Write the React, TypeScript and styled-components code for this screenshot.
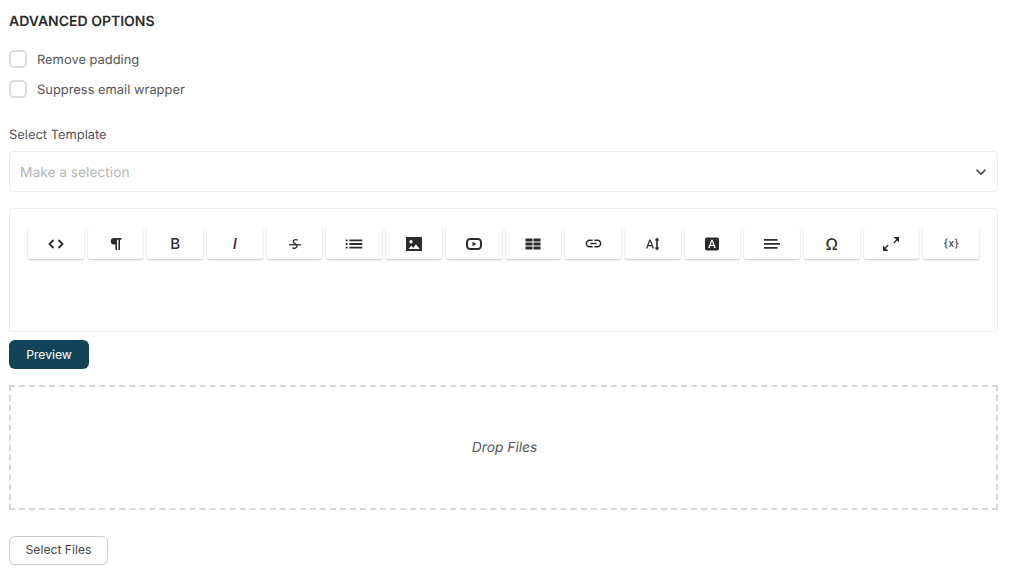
import React from "react";
import styled, { createGlobalStyle } from "styled-components";
import { MdLink, MdList, MdKeyboardArrowDown } from "react-icons/md";

const GlobalStyle = createGlobalStyle`
  html, body {
    margin: 0;
    padding: 0;
    background: #fff;
    overflow: hidden;
  }
  body {
    font-family: Inter, "Liberation Sans", sans-serif;
    text-rendering: geometricPrecision;
  }
`;

const Page = styled.div`
  width: 989px;
  height: 574px;
  padding: 14px 16px 0 9px;
  display: flex;
  flex-direction: column;
`;

const Heading = styled.h3`
  margin: 0 0 20px;
  font-size: 14px;
  line-height: 16px;
  font-weight: 600;
  color: #2b2b2b;
`;

const CheckRow = styled.label`
  display: flex;
  align-items: center;
  gap: 10px;
  height: 18px;
  margin-bottom: 12px;
  font-size: 12.9px;
  color: #555;
`;

const CheckText = styled.span`
  padding-top: 2px;
`;

const Box = styled.span`
  width: 18px;
  height: 18px;
  box-sizing: border-box;
  border: 2px solid #dcdcdc;
  border-radius: 5px;
  background: #fff;
`;

const FieldLabel = styled.div`
  margin-top: 18px;
  font-size: 12.9px;
  line-height: 16px;
  color: #555;
`;

const Select = styled.div`
  margin-top: 7px;
  height: 41px;
  box-sizing: border-box;
  border: 1px solid #ececec;
  border-radius: 4px;
  padding: 0 6px 0 10px;
  display: flex;
  align-items: center;
  justify-content: space-between;
  font-size: 13.75px;
  color: #b5b5b5;

  svg {
    color: #444;
  }
`;

const Placeholder = styled.span`
  padding-top: 2px;
`;

const Editor = styled.div`
  margin-top: 16px;
  height: 124px;
  box-sizing: border-box;
  border: 1px solid #ececec;
  border-radius: 4px;
  padding: 18px 18px 0;
`;

const Toolbar = styled.div`
  display: flex;
  gap: 4px;
`;

const ToolButton = styled.div`
  flex: 1;
  height: 32px;
  box-sizing: border-box;
  padding-top: 1px;
  border-radius: 2px;
  background: #fff;
  box-shadow: 0 1px 2px rgba(0, 0, 0, 0.24);
  display: flex;
  align-items: center;
  justify-content: center;
  color: #2b2b2b;
`;

const Glyph = styled.span<{ $size?: number; $italic?: boolean; $weight?: number }>`
  font-size: ${({ $size }) => $size ?? 14}px;
  font-style: ${({ $italic }) => ($italic ? "italic" : "normal")};
  font-weight: ${({ $weight }) => $weight ?? 600};
  line-height: 1;
`;

const Primary = styled.button`
  margin-top: 8px;
  align-self: flex-start;
  width: 80px;
  height: 29px;
  border: 0;
  border-radius: 6px;
  background: #134357;
  color: #fff;
  font-family: inherit;
  font-size: 12.2px;
  font-weight: 400;
`;

const Dropzone = styled.div`
  margin-top: 16px;
  height: 125px;
  box-sizing: border-box;
  border: 2px dashed #d6d6d6;
  padding-left: 2px;
  display: flex;
  align-items: center;
  justify-content: center;
  font-size: 13.8px;
  font-style: italic;
  color: #555;
`;

const Secondary = styled.button`
  margin-top: 26px;
  align-self: flex-start;
  width: 99px;
  height: 29px;
  box-sizing: border-box;
  padding-bottom: 3px;
  border: 1px solid #cfcfcf;
  border-radius: 6px;
  background: #fff;
  box-shadow: 0 1px 1px rgba(0, 0, 0, 0.06);
  color: #444;
  font-family: inherit;
  font-size: 12.2px;
  font-weight: 400;
`;

const icon = { width: 18, height: 18, viewBox: "0 0 18 18" };

const tools: React.ReactNode[] = [
  <svg {...icon} fill="none" stroke="currentColor" strokeWidth="1.8">
    <path d="M6.5 5 2.500 9l4 4M11.500 5l4 4-4 4" />
  </svg>,
  <svg {...icon} fill="currentColor">
    <path d="M7 3h7.500v1.700h-1.500V15h-1.600V4.700H10V15H8.400V9.500H7a3.250 3.250 0 0 1 0-6.500z" />
  </svg>,
  <Glyph $size={15} $weight={500}>B</Glyph>,
  <Glyph $size={15} $italic $weight={500}>I</Glyph>,
  <svg {...icon} fill="none" stroke="currentColor" strokeWidth="1.300">
    <path d="M11.800 5.200C9.800 4.200 7.200 4.600 7.200 6.500c0 2 3.800 2.300 3.800 4.500 0 2-2.500 2.800-4.500 1.800" />
    <path d="M3 9.800h12" />
  </svg>,
  <MdList size={22} />,
  <svg {...icon}>
    <rect x="1" y="2" width="16" height="14" fill="currentColor" />
    <circle cx="6" cy="6.800" r="1.700" fill="#fff" />
    <path d="M3.500 14 6.300 10.500 8.200 13 10.900 9.200 14.800 14z" fill="#fff" />
  </svg>,
  <svg {...icon}>
    <rect x="2" y="4" width="14" height="10" rx="3.200" fill="none" stroke="currentColor" strokeWidth="2" />
    <path d="M7.500 6.800 11.300 9l-3.800 2.200z" fill="currentColor" />
  </svg>,
  <svg {...icon} fill="currentColor">
    <path d="M1.500 3.500h7v3h-7zM9.500 3.500h7v3h-7zM1.500 7.500h7v3h-7zM9.500 7.500h7v3h-7zM1.500 11.500h7v3h-7zM9.500 11.500h7v3h-7z" />
  </svg>,
  <MdLink size={19} />,
  <svg {...icon} fill="currentColor">
    <path d="M5.300 4.500h1.400L10 13.500H8.600l-.8-2.300H4.200l-.8 2.300H2zm-.7 5.500h2.800L6 6.200z" />
    <path d="M13 2.500 15.500 5.500H13.800v7H15.500L13 15.500 10.500 12.500H12.200v-7H10.500z" />
  </svg>,
  <svg {...icon}>
    <rect x="2" y="2.500" width="14" height="13" rx="1.800" fill="currentColor" />
    <path d="M8.300 4.800h1.400L12.800 13h-1.500l-.7-2H7.400l-.7 2H5.200zm-.5 5h2.400L9 6.400z" fill="#fff" />
  </svg>,
  <svg {...icon} fill="currentColor">
    <path d="M1 4h13.500v1.700H1zM1 8h16v1.700H1zM1 12h13.500v1.700H1z" />
  </svg>,
  <Glyph $size={16} $weight={500}>Ω</Glyph>,
  <svg {...icon} fill="currentColor">
    <path d="M11.500 2H17v5.500l-1.900-2-2.900 2.900-.9-.9 2.900-2.900zM6.500 16H1v-5.500l1.900 2 2.900-2.900.9.900-2.900 2.900z" />
  </svg>,
  <Glyph $size={11} $weight={400}>{"{x}"}</Glyph>,
];

export default function App() {
  return (
    <Page>
      <GlobalStyle />
      <Heading>ADVANCED OPTIONS</Heading>
      <CheckRow>
        <Box />
        <CheckText>Remove padding</CheckText>
      </CheckRow>
      <CheckRow>
        <Box />
        <CheckText>Suppress email wrapper</CheckText>
      </CheckRow>
      <FieldLabel>Select Template</FieldLabel>
      <Select>
        <Placeholder>Make a selection</Placeholder>
        <MdKeyboardArrowDown size={20} />
      </Select>
      <Editor>
        <Toolbar>
          {tools.map((tool, index) => (
            <ToolButton key={index}>{tool}</ToolButton>
          ))}
        </Toolbar>
      </Editor>
      <Primary>Preview</Primary>
      <Dropzone>Drop Files</Dropzone>
      <Secondary>Select Files</Secondary>
    </Page>
  );
}
